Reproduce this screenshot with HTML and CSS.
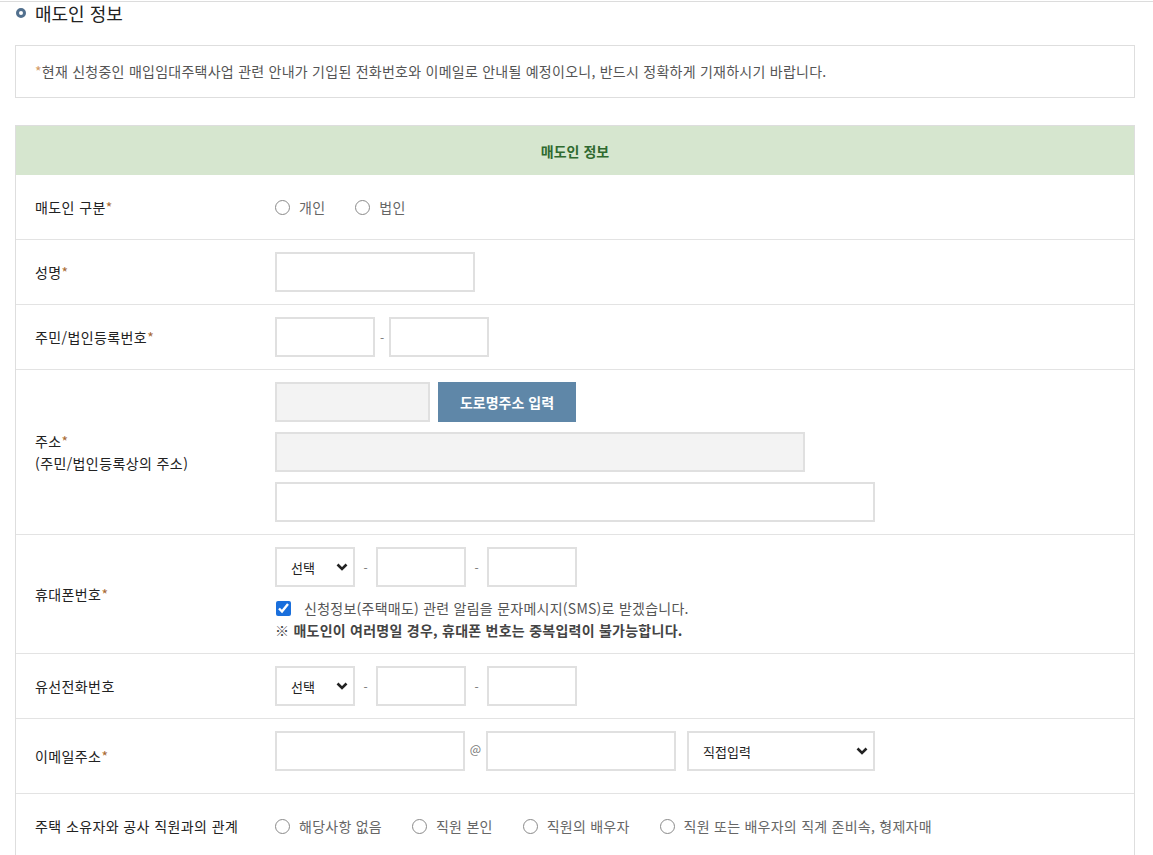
FILE: index.html
```html
<!DOCTYPE html>
<html lang="ko">
<head>
<meta charset="utf-8">
<title>매도인 정보</title>
<link rel="stylesheet" href="styles.css">
</head>
<body>
<div class="topline"></div>
<div class="page">
  <h2 class="title"><span class="ring"></span>매도인 정보</h2>

  <div class="notice"><span class="star-light">*</span>현재 신청중인 매입임대주택사업 관련 안내가 기입된 전화번호와 이메일로 안내될 예정이오니, 반드시 정확하게 기재하시기 바랍니다.</div>

  <div class="form">
    <div class="form-head">매도인 정보</div>

    <div class="row">
      <div class="label"><span>매도인 구분<span class="star">*</span></span></div>
      <div class="value">
        <div class="radios">
          <label class="radio"><input type="radio" name="kind">개인</label>
          <label class="radio"><input type="radio" name="kind">법인</label>
        </div>
      </div>
    </div>

    <div class="row">
      <div class="label"><span>성명<span class="star">*</span></span></div>
      <div class="value"><input class="field w200" type="text"></div>
    </div>

    <div class="row">
      <div class="label"><span>주민/법인등록번호<span class="star">*</span></span></div>
      <div class="value">
        <div class="inline">
          <input class="field w100" type="text"><span class="sep sep-s">-</span><input class="field w100" type="text">
        </div>
      </div>
    </div>

    <div class="row">
      <div class="label"><span>주소<span class="star">*</span><br>(주민/법인등록상의 주소)</span></div>
      <div class="value">
        <div class="addr">
          <div class="inline gap8">
            <input class="field gray w155" type="text" readonly>
            <button class="btn" type="button">도로명주소 입력</button>
          </div>
          <input class="field gray w530" type="text" readonly>
          <input class="field w600" type="text">
        </div>
      </div>
    </div>

    <div class="row">
      <div class="label"><span>휴대폰번호<span class="star">*</span></span></div>
      <div class="value">
        <div class="inline">
          <div class="select w80">
            <select><option>선택</option></select>
            <svg class="chev" width="12" height="8" viewBox="0 0 12 8"><path d="M1.5 1.5 L6 6 L10.5 1.5" fill="none" stroke="#222" stroke-width="2.6"/></svg>
          </div>
          <span class="sep sep-l">-</span>
          <input class="field w90" type="text">
          <span class="sep sep-l">-</span>
          <input class="field w90" type="text">
        </div>
        <label class="check"><input type="checkbox" checked>신청정보(주택매도) 관련 알림을 문자메시지(SMS)로 받겠습니다.</label>
        <p class="warn">※ 매도인이 여러명일 경우, 휴대폰 번호는 중복입력이 불가능합니다.</p>
      </div>
    </div>

    <div class="row">
      <div class="label"><span>유선전화번호</span></div>
      <div class="value">
        <div class="inline">
          <div class="select w80">
            <select><option>선택</option></select>
            <svg class="chev" width="12" height="8" viewBox="0 0 12 8"><path d="M1.5 1.5 L6 6 L10.5 1.5" fill="none" stroke="#222" stroke-width="2.6"/></svg>
          </div>
          <span class="sep sep-l">-</span>
          <input class="field w90" type="text">
          <span class="sep sep-l">-</span>
          <input class="field w90" type="text">
        </div>
      </div>
    </div>

    <div class="row row-email">
      <div class="label"><span>이메일주소<span class="star">*</span></span></div>
      <div class="value">
        <div class="inline">
          <input class="field w190" type="text">
          <span class="sep sep-at">@</span>
          <input class="field w190" type="text">
          <div class="select w188 ml12">
            <select><option>직접입력</option></select>
            <svg class="chev" width="12" height="8" viewBox="0 0 12 8"><path d="M1.5 1.5 L6 6 L10.5 1.5" fill="none" stroke="#222" stroke-width="2.6"/></svg>
          </div>
        </div>
      </div>
    </div>

    <div class="row">
      <div class="label"><span>주택 소유자와 공사 직원과의 관계</span></div>
      <div class="value">
        <div class="radios">
          <label class="radio"><input type="radio" name="rel">해당사항 없음</label>
          <label class="radio"><input type="radio" name="rel">직원 본인</label>
          <label class="radio"><input type="radio" name="rel">직원의 배우자</label>
          <label class="radio"><input type="radio" name="rel">직원 또는 배우자의 직계 존비속, 형제자매</label>
        </div>
      </div>
    </div>
  </div>
</div>
</body>
</html>
```

FILE: styles.css
```css
* { box-sizing: border-box; }

body {
  margin: 0;
  background: #fff;
  color: #333;
  font-family: "Noto Sans CJK KR", "Noto Sans", sans-serif;
  font-size: 14px;
}

.topline {
  height: 1px;
  margin-top: 1px;
  background: #dcdcdc;
}

.page {
  width: 1120px;
  margin-left: 15px;
}

.title {
  display: flex;
  align-items: center;
  gap: 9px;
  height: 22px;
  margin: 0;
  font-size: 18px;
  font-weight: 400;
  color: #222;
}

.ring {
  width: 10px;
  height: 10px;
  margin-left: 1px;
  border: 3px solid #52708e;
  border-radius: 50%;
}

.notice {
  margin-top: 21px;
  height: 53px;
  border: 1px solid #dedede;
  padding: 0 19px;
  line-height: 51px;
  font-size: 14px;
  letter-spacing: 0.25px;
  color: #555;
  white-space: nowrap;
}

.star-light { color: #d39a66; }
.star { color: #a86a32; }

.form {
  margin-top: 27px;
  border: 1px solid #dedede;
  border-bottom: none;
}

.form-head {
  height: 49px;
  background: #d6e6cf;
  color: #2f6a2f;
  font-weight: 700;
  font-size: 14px;
  display: flex;
  align-items: center;
  justify-content: center;
}

.row {
  display: grid;
  grid-template-columns: 259px 1fr;
  border-bottom: 1px solid #e3e3e3;
}

.label {
  display: flex;
  align-items: center;
  padding-left: 19px;
  font-size: 14px;
  letter-spacing: 0.4px;
  line-height: 22px;
  color: #222;
}

.value {
  padding: 12px 0;
  min-height: 64px;
  letter-spacing: 0.25px;
}

.row-email .value { padding-bottom: 22px; }

.inline {
  display: flex;
  align-items: center;
}

.gap8 { gap: 8px; }

.field {
  height: 40px;
  border: 2px solid #e0e0e0;
  background: #fff;
  padding: 0 10px;
  font: inherit;
  outline: none;
  display: block;
}

.field.gray { background: #f3f3f3; }

.w80 { width: 80px; }
.w90 { width: 90px; }
.w100 { width: 100px; }
.w155 { width: 155px; }
.w188 { width: 188px; }
.w190 { width: 190px; }
.w200 { width: 200px; }
.w530 { width: 530px; }
.w600 { width: 600px; }
.ml12 { margin-left: 11px; }

.sep {
  text-align: center;
  color: #777;
  font-size: 12px;
  letter-spacing: 0;
}
.sep-s { width: 14px; }
.sep-l { width: 21px; }
.sep-at { width: 21px; align-self: flex-start; padding-top: 9px; }

.addr {
  display: flex;
  flex-direction: column;
  gap: 10px;
}

.btn {
  width: 138px;
  height: 40px;
  border: none;
  background: #5f87a8;
  color: #fff;
  font: inherit;
  font-weight: 700;
  font-size: 14px;
}

.select {
  position: relative;
  height: 40px;
}

.select select {
  appearance: none;
  -webkit-appearance: none;
  width: 100%;
  height: 40px;
  border: 2px solid #e0e0e0;
  background: #fff;
  padding: 0 14px;
  font: inherit;
  font-size: 13px;
  color: #222;
  outline: none;
}

.chev {
  position: absolute;
  right: 7px;
  top: 16px;
  pointer-events: none;
}

.radios {
  display: flex;
  align-items: center;
  gap: 30px;
  height: 40px;
}

.radio {
  display: flex;
  align-items: center;
  gap: 9px;
  color: #666;
  font-size: 14px;
}

.radio input {
  appearance: none;
  -webkit-appearance: none;
  width: 15px;
  height: 15px;
  margin: 0;
  border: 1px solid #8a8a8a;
  border-radius: 50%;
  background: #fff;
}

.check {
  display: flex;
  align-items: center;
  gap: 13px;
  margin-top: 10px;
  height: 22px;
  color: #555;
  font-size: 14px;
}

.check input {
  width: 15px;
  height: 15px;
  margin: 0 0 0 1px;
  accent-color: #1a6fdc;
}

.warn {
  margin: 0;
  height: 22px;
  line-height: 22px;
  font-weight: 700;
  color: #444;
  font-size: 14px;
}
```
